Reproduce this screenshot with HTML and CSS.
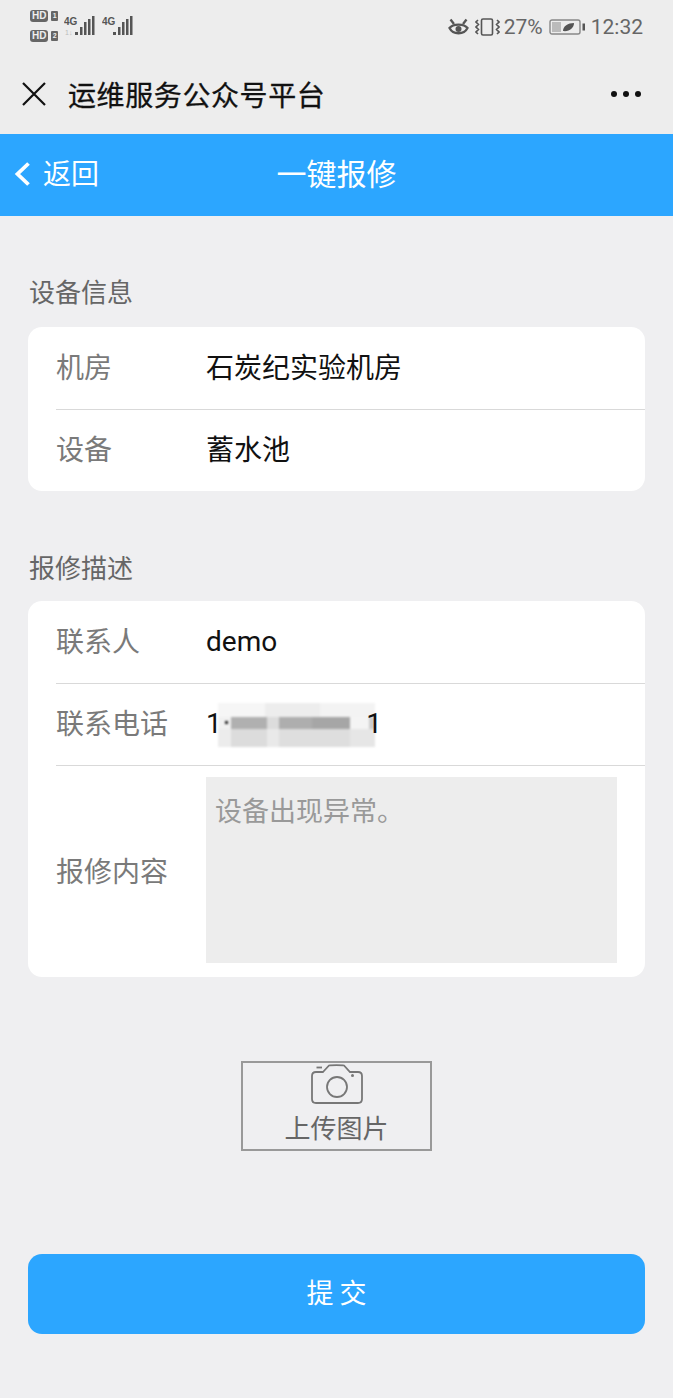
FILE: index.html
```html
<!DOCTYPE html>
<html lang="zh-CN">
<head>
    <meta charset="UTF-8">
    <meta name="viewport" content="width=device-width, initial-scale=1.0">
    <title>一键报修</title>
    <link rel="stylesheet" href="styles.css">
</head>
<body>
    <div class="status-bar">
        <div class="status-left">
            <div class="hd-stack">
                <div class="hd-line"><span class="hd-badge">HD</span><span class="sim-no">1</span></div>
                <div class="hd-line"><span class="hd-badge">HD</span><span class="sim-no">2</span></div>
            </div>
            <svg class="signal" width="32" height="21" viewBox="0 0 32 21">
                <text x="0" y="10" class="signal-text">4G</text>
                <text x="1" y="20" class="signal-sub">1↓</text>
                <rect x="11" y="17" width="3" height="3"/>
                <rect x="16" y="12" width="2.500" height="8"/>
                <rect x="20" y="7" width="2.500" height="13"/>
                <rect x="24" y="4" width="2.500" height="16"/>
                <rect x="28" y="1" width="2.500" height="19"/>
            </svg>
            <svg class="signal" width="32" height="21" viewBox="0 0 32 21">
                <text x="0" y="10" class="signal-text">4G</text>
                <rect x="11" y="17" width="3" height="3"/>
                <rect x="16" y="12" width="2.500" height="8"/>
                <rect x="20" y="7" width="2.500" height="13"/>
                <rect x="24" y="4" width="2.500" height="16"/>
                <rect x="28" y="1" width="2.500" height="19"/>
            </svg>
        </div>
        <div class="status-right">
            <svg class="eye-icon" width="21" height="19" viewBox="0 0 21 19" fill="none" stroke="#555" stroke-width="2.300">
                <path d="M1.500 10C5 5.500 16 5.500 19.500 10C16 17 5 17 1.500 10Z"/>
                <circle cx="10.500" cy="11" r="3" fill="#555" stroke="none"/>
                <path d="M2.500 1.500L6 6M18.500 1.500L15 6"/>
            </svg>
            <svg class="vibrate-icon" width="25" height="18" viewBox="0 0 25 18" fill="none" stroke="#555" stroke-width="1.600">
                <rect x="6.500" y="1" width="11" height="16" rx="1.500"/>
                <path d="M3 2L1 4L3.500 6.500L1 9L3.500 11.500L1 14L3 16M22 2L24 4L21.500 6.500L24 9L21.500 11.500L24 14L22 16"/>
            </svg>
            <span class="status-text">27%</span>
            <svg class="battery-icon" width="36" height="16" viewBox="0 0 36 16">
                <rect x="1" y="1" width="30" height="14" rx="2" fill="none" stroke="#888" stroke-width="1.400"/>
                <rect x="3" y="3" width="9" height="10" fill="#bbb"/>
                <path d="M14 12C14 7 19 4 25 4C25 9 20 13 14 12Z" fill="#555"/>
                <rect x="33.500" y="4.500" width="2.500" height="7" fill="#555"/>
            </svg>
            <span class="status-text">12:32</span>
        </div>
    </div>

    <div class="wechat-bar">
        <svg class="close-icon" width="26" height="26" viewBox="0 0 26 26" fill="none" stroke="#111" stroke-width="2.200">
            <path d="M2 2L24 24M24 2L2 24"/>
        </svg>
        <div class="wechat-title">运维服务公众号平台</div>
        <div class="dots"><i></i><i></i><i></i></div>
    </div>

    <div class="nav-bar">
        <div class="nav-back">
            <svg class="back-icon" width="16" height="24" viewBox="0 0 16 24" fill="none" stroke="#fff" stroke-width="3.800">
                <path d="M14.500 1.500L3.500 12L14.500 22.500"/>
            </svg>
            <span>返回</span>
        </div>
        <div class="nav-title">一键报修</div>
    </div>

    <div class="section-label first">设备信息</div>
    <div class="card">
        <div class="row">
            <div class="row-label">机房</div>
            <div class="row-value">石炭纪实验机房</div>
        </div>
        <div class="row">
            <div class="row-label">设备</div>
            <div class="row-value">蓄水池</div>
        </div>
    </div>

    <div class="section-label">报修描述</div>
    <div class="card">
        <div class="row">
            <div class="row-label">联系人</div>
            <div class="row-value latin">demo</div>
        </div>
        <div class="row">
            <div class="row-label">联系电话</div>
            <div class="row-value latin phone">
                <span>1</span>
                <div class="mosaic">
                    <div class="mosaic-top"></div>
                    <div class="mosaic-mid"><i class="mosaic-dot"></i></div>
                    <div class="mosaic-bottom"></div>
                </div>
                <span class="phone-end">1</span>
            </div>
        </div>
        <div class="row row-text">
            <div class="row-label">报修内容</div>
            <div class="text-box">设备出现异常。</div>
        </div>
    </div>

    <div class="upload">
        <svg class="camera-icon" width="52" height="40" viewBox="0 0 52 40" fill="none" stroke="#777" stroke-width="1.800">
            <path d="M12 8L18 1.500C20 1 31 1 33 1.500L39 8H47C50 8 51 9.500 51 12V35C51 38 50 39 47 39H5C2 39 1 38 1 35V12C1 9.500 2 8 5 8Z"/>
            <circle cx="26" cy="23" r="10"/>
            <circle cx="41.500" cy="11.500" r="1.500" fill="#777" stroke="none"/>
            <path d="M5.500 3.500H11"/>
        </svg>
        <div class="upload-text">上传图片</div>
    </div>

    <div class="submit">提 交</div>
</body>
</html>
```

FILE: styles.css
```css
* {
    box-sizing: border-box;
}
body {
    margin: 0;
    background-color: #efeff1;
    font-family: "Noto Sans CJK SC", "Noto Sans", sans-serif;
    color: #111;
    width: 673px;
    height: 1398px;
    overflow: hidden;
}
.status-bar {
    height: 54px;
    padding: 10px 30px 0 30px;
    background-color: #ededed;
    display: flex;
    justify-content: space-between;
}
.status-left {
    display: flex;
    gap: 6px;
}
.hd-stack {
    width: 28px;
    display: flex;
    flex-direction: column;
    gap: 8px;
}
.hd-line {
    display: flex;
    align-items: center;
    gap: 3px;
    height: 12px;
}
.hd-badge {
    background-color: #666;
    color: #eee;
    font: bold 10px/12px "Liberation Sans", sans-serif;
    border-radius: 3px;
    padding: 0 2px;
    height: 12px;
}
.sim-no {
    background-color: #666;
    color: #eee;
    font: bold 7px/10px "Liberation Sans", sans-serif;
    width: 7px;
    height: 10px;
    text-align: center;
    border-radius: 1px;
}
.signal {
    margin-top: 5px;
    fill: #555;
}
.signal-text {
    font: bold 10px "Liberation Sans", sans-serif;
}
.signal-sub {
    font: 7px "Liberation Sans", sans-serif;
    fill: #bbb;
}
.status-right {
    display: flex;
    align-items: center;
    height: 34px;
}
.vibrate-icon {
    margin: 0 4px 0 6px;
}
.battery-icon {
    margin: 0 6px;
}
.status-text {
    font: 21px Roboto, sans-serif;
    color: #666;
}
.wechat-bar {
    height: 80px;
    background-color: #ededed;
    padding: 0 32px 0 21px;
    display: flex;
    align-items: center;
}
.close-icon {
    margin-right: 21px;
}
.wechat-title {
    flex: 1;
    font-size: 28px;
    letter-spacing: 0.6px;
    -webkit-text-stroke: 0.3px #111;
}
.dots {
    display: flex;
    gap: 6px;
}
.dots i {
    width: 6px;
    height: 6px;
    border-radius: 50%;
    background-color: #111;
}
.nav-bar {
    height: 82px;
    padding-bottom: 6px;
    background-color: #2ca6ff;
    color: #fff;
    position: relative;
    display: flex;
    align-items: center;
    justify-content: center;
}
.nav-back {
    position: absolute;
    left: 14px;
    top: 0;
    height: 82px;
    padding-bottom: 6px;
    display: flex;
    align-items: center;
    gap: 13px;
    font-size: 28px;
}
.back-icon {
    margin-top: 3px;
}
.nav-title {
    font-size: 30px;
}
.section-label {
    margin: 58px 0 0 29px;
    height: 52px;
    font-size: 26px;
    line-height: 36px;
    color: #666;
}
.section-label.first {
    margin-top: 57px;
    height: 54px;
}
.card {
    margin: 0 28px;
    background-color: #fff;
    border-radius: 14px;
    padding-left: 28px;
}
.row {
    height: 82px;
    padding-bottom: 5px;
    display: flex;
    align-items: center;
    border-top: 1px solid #d9d9d9;
}
.row:first-child {
    border-top: none;
}
.row-label {
    width: 150px;
    flex-shrink: 0;
    font-size: 28px;
    color: #7a7a7a;
}
.row-value {
    font-size: 28px;
    color: #111;
}
.latin {
    font-family: Roboto, sans-serif;
    margin-top: 4px;
}
.phone {
    position: relative;
    display: flex;
    width: 176px;
    height: 38px;
    line-height: 38px;
    justify-content: space-between;
}
.mosaic {
    position: absolute;
    left: 12px;
    top: -2px;
    width: 157px;
    height: 44px;
    display: flex;
    flex-direction: column;
    filter: blur(1px);
}
.mosaic-top {
    height: 14px;
    background: linear-gradient(to right, #f6f6f6 0 30%, #ededed 30% 65%, #f3f3f3 65% 100%);
}
.mosaic-mid {
    height: 12px;
    position: relative;
    background: linear-gradient(to right, #f1f1f1 0 8%, #b0b0b0 8% 31%, #dcdcdc 31% 39%, #aeaeae 39% 60%, #a6a6a6 60% 84%, #f4f4f4 84% 96%, #ccc 96% 100%);
}
.mosaic-dot {
    position: absolute;
    left: 7px;
    top: 4px;
    width: 3px;
    height: 3px;
    background-color: #222;
}
.mosaic-bottom {
    height: 18px;
    background: linear-gradient(to right, #ececec 0 8%, #dcdcdc 8% 31%, #e9e9e9 31% 39%, #dedede 39% 84%, #e6e6e6 84% 100%);
}
.phone-end {
    position: relative;
}
.row-text {
    height: 212px;
    padding: 11px 28px 14px 0;
}
.text-box {
    flex: 1;
    height: 100%;
    background-color: #ededed;
    color: #999;
    font-size: 27px;
    padding: 17px 9px;
    line-height: 1.2;
}
.upload {
    margin: 84px auto 0;
    width: 191px;
    height: 90px;
    border: 2px solid #999;
    display: flex;
    flex-direction: column;
    align-items: center;
}
.camera-icon {
    margin-top: 1px;
}
.upload-text {
    font-size: 26px;
    line-height: 34px;
    color: #666;
    margin-top: 6px;
}
.submit {
    margin: 103px 28px 0;
    height: 80px;
    padding-bottom: 6px;
    border-radius: 14px;
    background-color: #2ca6ff;
    color: #fff;
    font-size: 27px;
    display: flex;
    align-items: center;
    justify-content: center;
}
```
